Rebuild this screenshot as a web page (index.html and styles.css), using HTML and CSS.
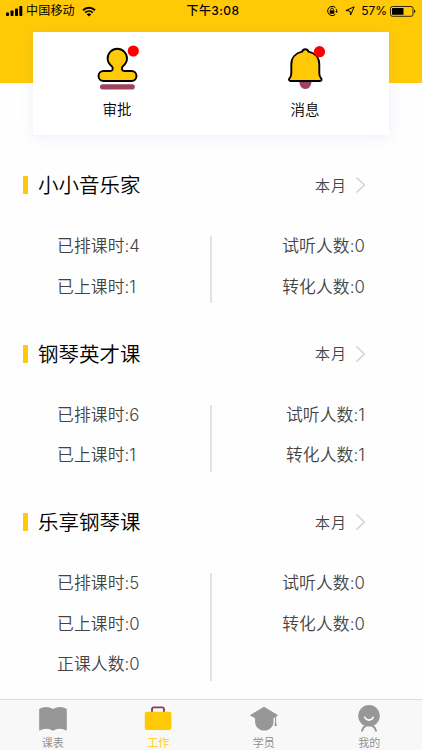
FILE: index.html
```
<!DOCTYPE html>
<html lang="zh-CN">
<head>
    <meta charset="utf-8">
    <title>工作</title>
    <meta name="viewport" content="width=device-width, initial-scale=1">
    <link rel="stylesheet" href="styles.css">
</head>

<body>
    <header class="header">
        <div class="status">
            <div class="status-left">
                <svg class="signal" width="17" height="10" viewBox="0 0 17 10">
                    <rect x="0" y="6.5" width="3" height="3.5" rx=".8"/>
                    <rect x="4.5" y="4.5" width="3" height="5.5" rx=".8"/>
                    <rect x="9" y="2.5" width="3" height="7.5" rx=".8"/>
                    <rect x="13.3" y="0" width="3" height="10" rx=".8"/>
                </svg>
                <span class="carrier">中国移动</span>
                <svg class="wifi" width="14" height="11" viewBox="0 0 14 11">
                    <path d="M1 4.2a8.7 8.7 0 0 1 12 0M3.2 6.6a5.6 5.6 0 0 1 7.6 0" fill="none" stroke="#000" stroke-width="1.9"/>
                    <path d="M7 10.6 4.7 8.2a3.4 3.4 0 0 1 4.6 0z"/>
                </svg>
            </div>
            <div class="time">下午3:08</div>
            <div class="status-right">
                <svg width="12" height="12" viewBox="0 0 12 12" fill="none" stroke="#000">
                    <path d="M9.5 2.7A4.6 4.6 0 1 0 9.3 9.4M10.4 4.1a4.6 4.6 0 0 1 .1 2.8"/>
                    <path d="M9.2 6.3h2.7l-1.4 1.8z" fill="#000" stroke="none"/>
                    <rect x="3.7" y="5.4" width="4.6" height="3.3" fill="#000" stroke="none"/>
                    <path d="M4.7 5.5V4.4a1.3 1.3 0 0 1 2.6 0v1.1" stroke-width=".9"/>
                </svg>
                <svg class="arrow" width="10" height="10" viewBox="0 0 10 10">
                    <path d="M9.2.8 5.6 9 5 5.1.9 4.5z" fill="none" stroke="#000" stroke-width="1" stroke-linejoin="round"/>
                </svg>
                <span class="percent">57%</span>
                <svg width="26" height="11" viewBox="0 0 26 11">
                    <rect x=".5" y=".5" width="22.5" height="9.8" rx="2" fill="none" stroke="#000" stroke-width=".8"/>
                    <rect x="2" y="2" width="11.5" height="6.8" rx=".6"/>
                    <path d="M24.2 3.6c1.6.6 1.6 3 0 3.6z"/>
                </svg>
            </div>
        </div>

        <nav class="card">
            <div class="entry">
                <svg width="44" height="46" viewBox="0 0 44 46">
                    <path d="M17 21.500C14.500 19.500 12.600 17 12.600 13.500a9.700 9.700 0 0 1 19.400 0c0 3.500-1.900 6-4.400 8-1.500 2.200-.8 4.500 2.200 4.500H36.500a5 5 0 0 1 0 10H8.500a5 5 0 0 1 0-10h6.300c3 0 3.700-2.300 2.200-4.500z" fill="#ffca05" stroke="#000" stroke-width="1.900"/>
                    <rect x="5" y="39.300" width="34.800" height="5.200" rx="2.500" fill="#9e435c"/>
                    <circle cx="38.300" cy="6" r="5.600" fill="#f00"/>
                </svg>
                <span class="entry-name">审批</span>
            </div>
            <div class="entry">
                <svg width="44" height="46" viewBox="0 0 44 46">
                    <path d="M16.300 36h12.200c0 4.500-2.400 8-6.100 8s-6.100-3.500-6.100-8z" fill="#9e435c"/>
                    <path d="M22.300 4.300c1.700 0 2.700.8 3.200 2.300C32 8 36.300 12.800 36.300 19.500v9c0 2.400.6 3.500 1.800 4.800 1 1.200.4 2.700-1.100 2.700H7.600c-1.500 0-2.100-1.500-1.100-2.700 1.200-1.300 1.800-2.400 1.800-4.800v-9C8.300 12.800 12.600 8 19.100 6.600c.5-1.500 1.500-2.300 3.200-2.300z" fill="#ffca05" stroke="#000" stroke-width="1.900"/>
                    <circle cx="36.500" cy="6.700" r="5.600" fill="#f00"/>
                </svg>
                <span class="entry-name">消息</span>
            </div>
        </nav>
    </header>

    <main class="courses">
        <section class="course">
            <div class="course-head">
                <h2 class="course-name">小小音乐家</h2>
                <span class="period">本月</span>
                <svg class="chevron" width="11" height="18" viewBox="0 0 11 18"><path d="M1.500 1.500 9.300 9l-7.800 7.500"/></svg>
            </div>
            <div class="stats">
                <ul class="planned">
                    <li>已排课时:4</li>
                    <li>已上课时:1</li>
                </ul>
                <ul class="people">
                    <li>试听人数:0</li>
                    <li>转化人数:0</li>
                </ul>
            </div>
        </section>

        <section class="course">
            <div class="course-head">
                <h2 class="course-name">钢琴英才课</h2>
                <span class="period">本月</span>
                <svg class="chevron" width="11" height="18" viewBox="0 0 11 18"><path d="M1.500 1.500 9.300 9l-7.800 7.500"/></svg>
            </div>
            <div class="stats">
                <ul class="planned">
                    <li>已排课时:6</li>
                    <li>已上课时:1</li>
                </ul>
                <ul class="people">
                    <li>试听人数:1</li>
                    <li>转化人数:1</li>
                </ul>
            </div>
        </section>

        <section class="course">
            <div class="course-head">
                <h2 class="course-name">乐享钢琴课</h2>
                <span class="period">本月</span>
                <svg class="chevron" width="11" height="18" viewBox="0 0 11 18"><path d="M1.500 1.500 9.300 9l-7.800 7.500"/></svg>
            </div>
            <div class="stats">
                <ul class="planned">
                    <li>已排课时:5</li>
                    <li>已上课时:0</li>
                    <li>正课人数:0</li>
                </ul>
                <ul class="people">
                    <li>试听人数:0</li>
                    <li>转化人数:0</li>
                </ul>
            </div>
        </section>
    </main>

    <footer class="tabs">
        <div class="tab">
            <svg width="30" height="28" viewBox="0 0 30 28" fill="#979797">
                <path d="M1.200 4C5 1.200 11 1.200 15 4c4-2.800 10-2.800 13.800 0v21.700C24 23 19 23 15 25.700 11 23 6 23 1.200 25.700z"/>
            </svg>
            <span>课表</span>
        </div>
        <div class="tab active">
            <svg width="30" height="28" viewBox="0 0 30 28">
                <path d="M9 8V4.200a1.800 1.800 0 0 1 1.800-1.800h8.400A1.800 1.800 0 0 1 21 4.200V8" fill="none" stroke="#8d3a56" stroke-width="1.900"/>
                <rect x="1.800" y="6.800" width="26.600" height="18.300" rx="2" fill="#ffca05"/>
            </svg>
            <span>工作</span>
        </div>
        <div class="tab">
            <svg width="30" height="28" viewBox="0 0 30 28" fill="#979797">
                <path d="M15 1.800 29.200 10.300 24.500 13.300v3.500c0 5-4 8.800-9.200 8.800s-9.200-3.800-9.200-8.800v-3.500L.8 10.300z"/>
                <path d="M26 11.500h1.100V17l.8 4h-2.500l.6-4z"/>
            </svg>
            <span>学员</span>
        </div>
        <div class="tab">
            <svg width="30" height="28" viewBox="0 0 30 28">
                <circle cx="15" cy="10.800" r="10.800" fill="#979797"/>
                <path d="M10.800 12.300c1.500 3.700 6.900 3.700 8.400 0" fill="none" stroke="#fff" stroke-width="1.600" stroke-linecap="round"/>
                <path d="M11.500 21c-2 1-3 2.500-3.500 4.700M18.500 21c2 1 3 2.500 3.500 4.700" fill="none" stroke="#979797" stroke-width="2" stroke-linecap="round"/>
            </svg>
            <span>我的</span>
        </div>
    </footer>
</body>
</html>
```
FILE: styles.css
```
* {
    box-sizing: border-box;
}

body {
    display: flex;
    flex-direction: column;
    height: 750px;
    margin: 0;
    background: #fefefe;
    color: #000;
    font-family: "Noto Sans CJK SC", sans-serif;
    font-weight: 350;
    overflow: hidden;
}

svg {
    display: block;
    flex: none;
}

/* Header */
.header {
    height: 83px;
    flex: none;
    background: #ffca05;
}

.status {
    display: grid;
    grid-template-columns: 1fr auto 1fr;
    align-items: center;
    height: 22px;
    margin-bottom: 10px;
    padding: 0 6px;
    color: #000;
    font-family: Inter, "Noto Sans CJK SC", sans-serif;
    font-size: 12px;
    font-weight: 400;
    line-height: 22px;
}

.status-left,
.status-right {
    display: flex;
    align-items: center;
}

.carrier {
    margin: 0 7px 0 3px;
    letter-spacing: 0.2px;
}

.time {
    padding-left: 4px;
    font-weight: 500;
    letter-spacing: 0.4px;
}

.status-right {
    justify-content: flex-end;
}

.arrow {
    margin: 0 6px 0 7px;
}

.percent {
    margin-right: 3px;
}

/* Shortcut card */
.card {
    display: flex;
    height: 103px;
    margin: 0 33px;
    padding: 13px 0 0 0;
    background: #fff;
    box-shadow: 0 2px 12px rgba(90, 120, 220, 0.12);
}

.entry {
    display: flex;
    flex: 1;
    flex-direction: column;
    align-items: center;
}

.entry:first-child {
    padding-right: 10px;
}

.entry:last-child {
    padding-left: 10px;
}

.entry-name {
    margin-top: 7px;
    font-size: 14.5px;
    line-height: 22px;
}

/* Courses */
.courses {
    flex: 1;
    padding: 88px 57px 0 23px;
}

.course {
    height: 168.6px;
}

.course-head {
    display: flex;
    align-items: center;
    height: 28px;
    margin-bottom: 27px;
}

.course-head::before {
    content: "";
    width: 5px;
    height: 18px;
    margin-right: 10px;
    background: #ffca05;
}

.course-name {
    flex: 1;
    margin: 0;
    padding-bottom: 2px;
    font-size: 20.5px;
    font-weight: 350;
    line-height: 28px;
}

.period {
    margin-right: 8px;
    padding-bottom: 2px;
    color: #444;
    font-size: 15px;
    letter-spacing: 1px;
}

.chevron {
    margin-right: -1px;
    fill: none;
    stroke: #d4d4d4;
    stroke-width: 1.7;
}

.stats {
    display: flex;
    color: #444;
    font-family: Inter, "Noto Sans CJK SC", sans-serif;
    font-size: 16.8px;
    letter-spacing: 0.1px;
    line-height: 40.5px;
}

.stats ul {
    margin: 0;
    padding: 0;
    list-style: none;
}

.stats .planned {
    width: 187px;
    padding-left: 34px;
}

.people {
    position: relative;
    flex: 1;
    text-align: right;
}

.people::before {
    content: "";
    position: absolute;
    top: 10px;
    bottom: 4px;
    left: 0;
    width: 2px;
    background: #e2e2e2;
}

/* Tab bar */
.tabs {
    display: flex;
    flex: none;
    height: 51px;
    border-top: 1px solid #dcdcdc;
    background: #f8f8f8;
}

.tab {
    display: flex;
    flex: 1;
    flex-direction: column;
    align-items: center;
    padding-top: 5px;
    color: #8c8c8c;
    font-size: 11px;
    line-height: 18px;
}

.active {
    color: #ffca05;
}
```
